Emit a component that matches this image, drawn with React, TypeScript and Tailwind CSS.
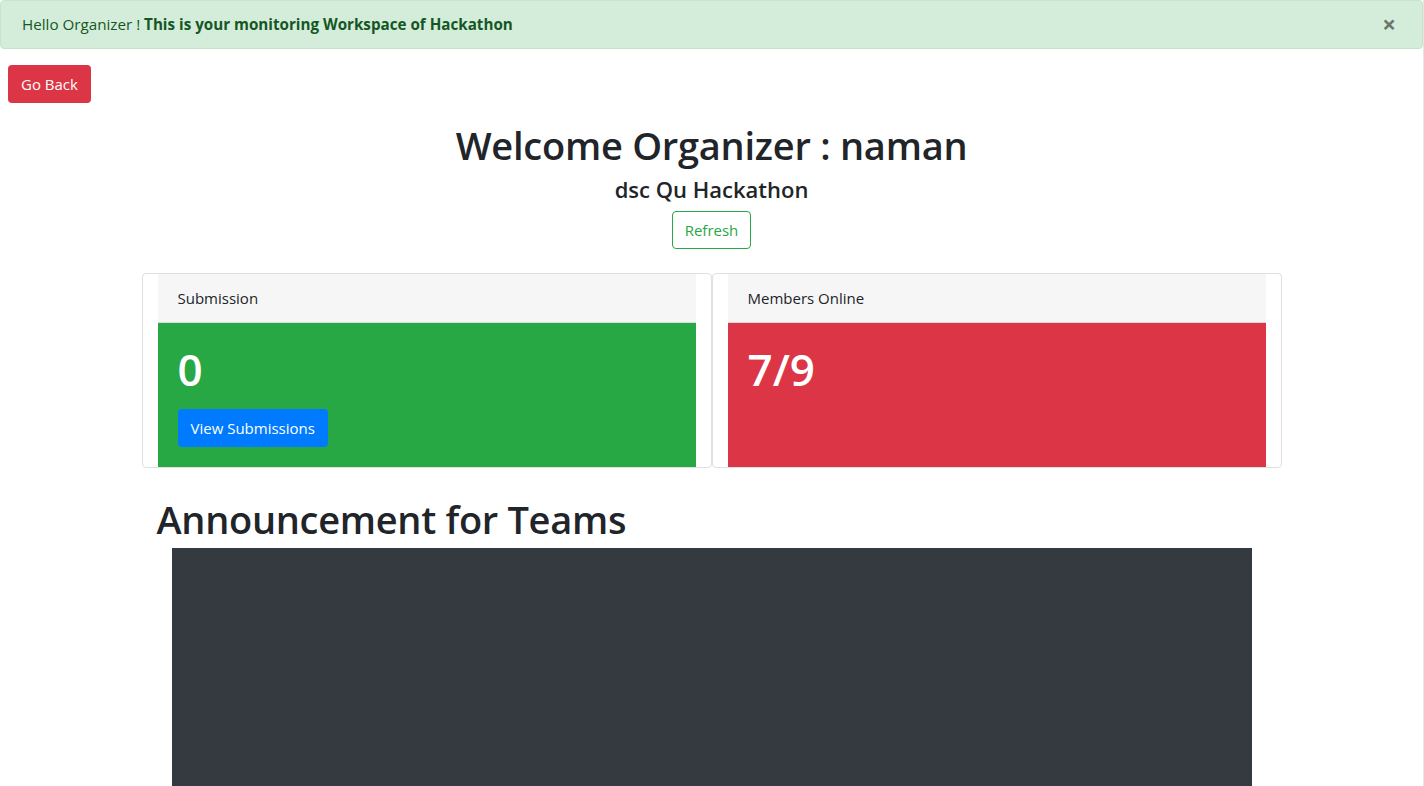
import React from "react";

export default function App() {
  const font = { fontFamily: '"Open Sans", "Noto Sans", Arial, sans-serif' };
  return (
    <div className="min-h-[786px] w-[1424px] bg-white border-r border-[#e6e6e6] text-[#212529]" style={font}>
      <div className="relative flex items-center h-[49px] px-[21px] bg-[#d4edda] border border-[#c3e6cb] rounded-[4px] text-[#155724] text-[15.2px]">
        <span>
          Hello Organizer ! <strong className="font-bold">This is your monitoring Workspace of Hackathon</strong>
        </span>
        <button className="absolute right-[26px] top-[11px] text-[24px] font-bold leading-none text-black opacity-50">×</button>
      </div>

      <div className="pl-[8px] pt-[16px]">
        <button className="h-[38px] px-[13px] rounded-[4px] bg-[#dc3545] text-white text-[15px]">Go Back</button>
      </div>

      <div className="flex flex-col items-center mt-[18px]">
        <h1 className="text-[38px] font-semibold leading-[48px] tracking-[-0.25px]">Welcome Organizer : naman</h1>
        <h4 className="text-[22px] font-semibold leading-[30px] mt-[5px]">dsc Qu Hackathon</h4>
        <button className="mt-[7px] h-[38px] px-[12px] rounded-[4px] border border-[#28a745] text-[#28a745] text-[15px]">Refresh</button>
      </div>

      <div className="w-[1140px] mx-auto mt-[24px] flex">
        <div className="w-[570px] h-[195px] border border-[#dfdfdf] rounded-[4px] px-[15px] flex flex-col">
          <div className="h-[49px] bg-[#f6f6f6] border-b border-[#dcdcdc] flex items-center px-[20px] text-[15px]">Submission</div>
          <div className="flex-1 bg-[#28a745] px-[20px] pt-[18px] text-white">
            <div className="text-[44px] font-semibold leading-[56px]">0</div>
            <button className="mt-[12px] h-[38px] px-[13px] rounded-[4px] bg-[#007bff] text-white text-[15px]">View Submissions</button>
          </div>
        </div>
        <div className="w-[570px] h-[195px] border border-[#dfdfdf] rounded-[4px] px-[15px] flex flex-col">
          <div className="h-[49px] bg-[#f6f6f6] border-b border-[#dcdcdc] flex items-center px-[20px] text-[15px]">Members Online</div>
          <div className="flex-1 bg-[#dc3545] px-[20px] pt-[18px] text-white">
            <div className="text-[44px] font-semibold leading-[56px]">7/9</div>
          </div>
        </div>
      </div>

      <div className="w-[1140px] mx-auto px-[15px] mt-[27px]">
        <h1 className="text-[38px] font-semibold leading-[48px] tracking-[-0.3px]">Announcement for Teams</h1>
        <div className="mx-[15px] mt-[5px] h-[260px] bg-[#343a40]"></div>
      </div>
    </div>
  );
}
